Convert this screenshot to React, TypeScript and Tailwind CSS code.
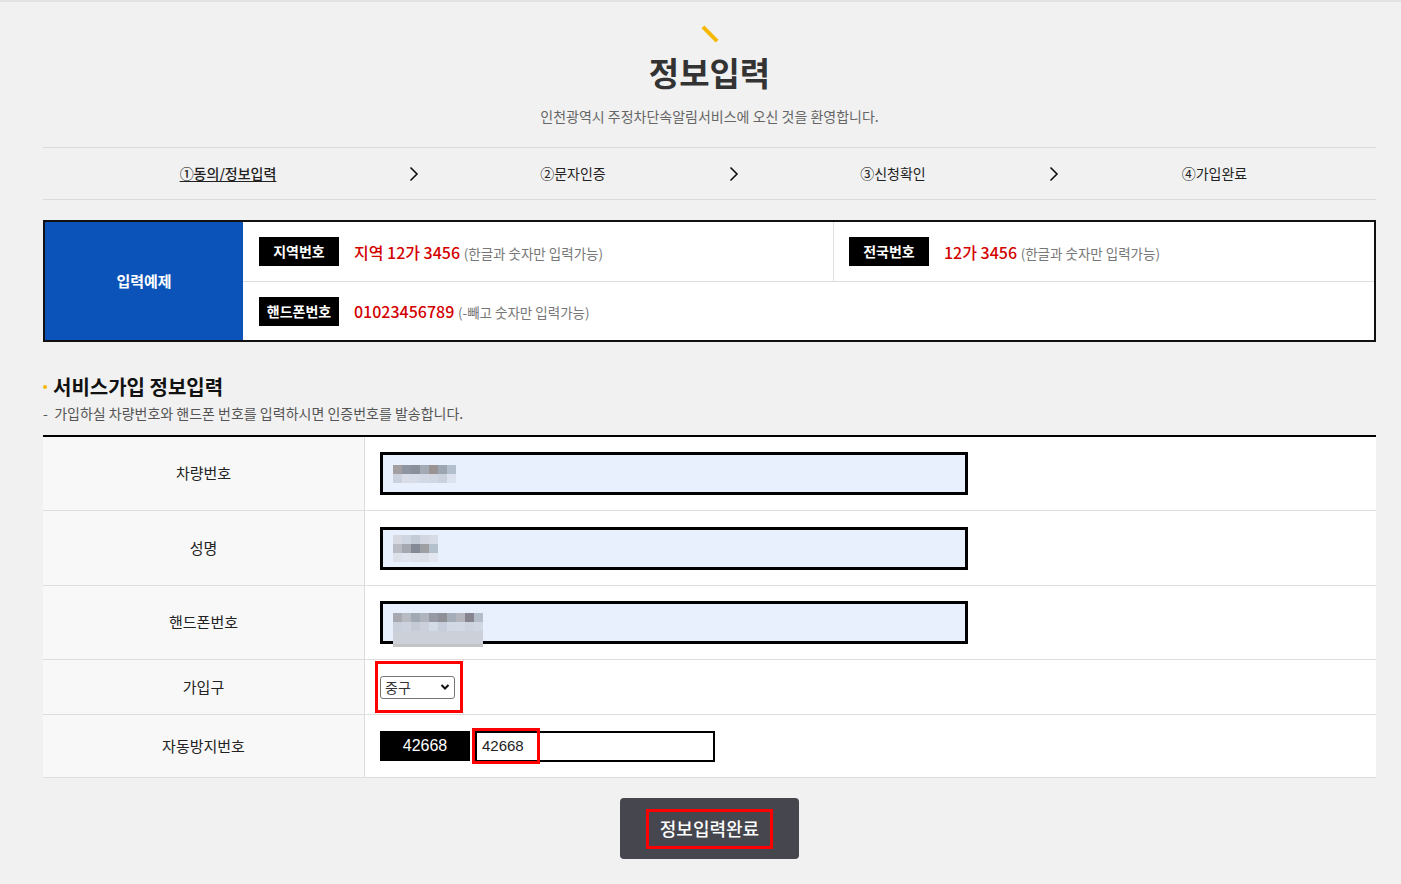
import React from 'react';

const font = { fontFamily: '"Noto Sans CJK KR", "Noto Sans", sans-serif' };

const steps = [
  { label: '①동의/정보입력', active: true, w: 'w-[370px]' },
  { label: '②문자인증', active: false, w: 'w-[320px]' },
  { label: '③신청확인', active: false, w: 'w-[320px]' },
  { label: '④가입완료', active: false, w: 'flex-1' },
];

const Chevron = () => (
  <svg width="10" height="16" viewBox="0 0 10 16" className="absolute right-[-6px] top-1/2 -translate-y-1/2">
    <path d="M1.5 1.5 L8 8 L1.5 14.5" fill="none" stroke="#111" strokeWidth="1.6" />
  </svg>
);

// pixelated placeholder for the blurred values in the form
const Blur = ({ cols, rows }: { cols: string[]; rows: string[] }) => (
  <div className="flex flex-col">
    <div className="flex">
      {cols.map((c, i) => (
        <div key={i} className="w-[9px] h-[9px]" style={{ background: c }} />
      ))}
    </div>
    <div className="flex">
      {rows.map((c, i) => (
        <div key={i} className="w-[9px] h-[9px]" style={{ background: c }} />
      ))}
    </div>
  </div>
);

const Badge = ({ children }: { children: React.ReactNode }) => (
  <span className="inline-flex items-center justify-center w-[80px] h-[29px] bg-black text-white text-[14px] font-bold">
    {children}
  </span>
);

const Row = ({ label, h, children }: { label: string; h: string; children: React.ReactNode }) => (
  <div className={`flex ${h} border-b border-[#dddddd]`}>
    <div className="w-[322px] bg-[#f8f8f8] border-r border-[#dddddd] flex items-center justify-center text-[15px] text-[#222]">
      {label}
    </div>
    <div className="flex-1 bg-white flex items-center pl-[15px]">{children}</div>
  </div>
);

const BlueInput = ({ children }: { children: React.ReactNode }) => (
  <div className="w-[588px] h-[43px] border-[3px] border-black bg-[#e8f0fe] flex items-center pl-[10px]">{children}</div>
);

export default function App() {
  return (
    <div className="min-h-[884px] bg-[#f1f1f1] border-t-2 border-[#e2e2e2]" style={font}>
      <div className="mx-[43px] w-[1333px]">
        <div className="flex flex-col items-center pt-[22px]">
          <div className="w-[4px] h-[20px] bg-[#f5b800] -rotate-45" />
          <h1 className="mt-[6px] text-[33px] leading-[44px] font-bold text-[#333]">정보입력</h1>
          <p className="mt-[12px] text-[14px] leading-[20px] text-[#666]">인천광역시 주정차단속알림서비스에 오신 것을 환영합니다.</p>
        </div>

        <div className="mt-[21px] flex h-[53px] border-y border-[#dcdcdc]">
          {steps.map((s, i) => (
            <div key={i} className={`relative ${s.w} flex items-center justify-center text-[14px] text-[#222]`}>
              <span className={s.active ? 'underline underline-offset-2 font-medium' : ''}>{s.label}</span>
              {i < 3 && <Chevron />}
            </div>
          ))}
        </div>

        <div className="mt-[20px] flex h-[122px] border-2 border-[#111] bg-white">
          <div className="w-[198px] bg-[#0b52b9] flex items-center justify-center text-white text-[15px] font-bold">
            입력예제
          </div>
          <div className="flex-1 flex flex-col">
            <div className="flex h-[60px] border-b border-[#dddddd]">
              <div className="w-[591px] border-r border-[#e2e2e2] flex items-center pl-[16px] gap-[15px]">
                <Badge>지역번호</Badge>
                <span className="text-[16px] text-[#d40000] font-medium">
                  지역 12가 3456 <span className="text-[13.5px] font-normal text-[#777]">(한글과 숫자만 입력가능)</span>
                </span>
              </div>
              <div className="flex-1 flex items-center pl-[15px] gap-[15px]">
                <Badge>전국번호</Badge>
                <span className="text-[16px] text-[#d40000] font-medium">
                  12가 3456 <span className="text-[13.5px] font-normal text-[#777]">(한글과 숫자만 입력가능)</span>
                </span>
              </div>
            </div>
            <div className="flex-1 flex items-center pl-[16px] gap-[15px]">
              <Badge>핸드폰번호</Badge>
              <span className="text-[16px] text-[#d40000] font-medium">
                01023456789 <span className="text-[13.5px] font-normal text-[#777]">(-빼고 숫자만 입력가능)</span>
              </span>
            </div>
          </div>
        </div>

        <div className="mt-[30px] flex items-center gap-[6px]">
          <span className="w-[4px] h-[4px] rounded-full bg-[#f5b800]" />
          <h2 className="text-[20px] font-bold text-[#111] leading-[30px]">서비스가입 정보입력</h2>
        </div>
        <p className="mt-[1px] text-[14px] leading-[20px] text-[#555]">- &nbsp;가입하실 차량번호와 핸드폰 번호를 입력하시면 인증번호를 발송합니다.</p>

        <div className="mt-[12px] border-t-2 border-black">
          <Row label="차량번호" h="h-[74px]">
            <BlueInput>
              <Blur
                cols={['#a39e9f', '#8c95a0', '#8a9099', '#a3aab3', '#9a9394', '#9ca6b3', '#b4bfcd']}
                rows={['#cbd1de', '#d8dde8', '#d6dce8', '#d2d8e4', '#d0d6e2', '#cbd1dd', '#dde3ee']}
              />
            </BlueInput>
          </Row>
          <Row label="성명" h="h-[75px]">
            <BlueInput>
              <div className="flex flex-col">
                <div className="flex">
                  {['#d6d9e2', '#cfd5e1', '#c3cbd6', '#d2d6e0', '#d6dbe5'].map((c, i) => (
                    <div key={i} className="w-[9px] h-[9px]" style={{ background: c }} />
                  ))}
                </div>
                <Blur
                  cols={['#b9bcc4', '#a5a8b0', '#838a95', '#9d9fa3', '#b5c0cd']}
                  rows={['#dde1ea', '#dfe4ee', '#dce1ea', '#dadfe8', '#e2e6ef']}
                />
              </div>
            </BlueInput>
          </Row>
          <Row label="핸드폰번호" h="h-[74px]">
            <BlueInput>
              <div className="flex flex-col mt-[14px]">
                <Blur
                  cols={['#a7a8b0', '#b8bcc2', '#a0a9b4', '#b0b4bc', '#9699a4', '#8f8f98', '#a5adb9', '#b4b5bc', '#86848f', '#b3bcc9']}
                  rows={['#c9cfdb', '#ccd2de', '#c6cad6', '#ccd0dc', '#d2dbe6', '#c8cddb', '#d2d8e4', '#d3d9e5', '#cdd3df', '#d0d6e2']}
                />
                <div className="w-[90px] h-[13px] bg-[#ccd0d9]" />
                <div className="w-[90px] h-[3px] bg-[#c4c4c4]" />
              </div>
            </BlueInput>
          </Row>
          <Row label="가입구" h="h-[55px]">
            <div className="-ml-[5px] border-[3px] border-[#ff0000] pl-[2px] pr-[5px] h-[52px] flex items-center">
              <div className="w-[75px] h-[23px] border border-[#767676] rounded-[3px] bg-white flex items-center justify-between px-[4px] text-[14px] text-[#333]">
                <span>중구</span>
                <svg width="10" height="8" viewBox="0 0 10 8">
                  <path d="M1.5 2 L5 5.5 L8.5 2" fill="none" stroke="#111" strokeWidth="2" />
                </svg>
              </div>
            </div>
          </Row>
          <Row label="자동방지번호" h="h-[63px]">
            <div className="flex items-center">
              <div
                className="w-[90px] h-[30px] bg-black text-white text-[16px] flex items-center justify-center"
                style={{ fontFamily: '"Liberation Sans", Arial, sans-serif' }}
              >
                42668
              </div>
              <div className="relative ml-[5px] w-[240px] h-[31px] border-2 border-black bg-white flex items-center pl-[5px] text-[15px] text-[#222]">
                <span style={{ fontFamily: '"Liberation Sans", Arial, sans-serif' }}>42668</span>
                <div className="absolute left-[-5px] top-[-5px] w-[68px] h-[36px] border-[3px] border-[#ff0000]" />
              </div>
            </div>
          </Row>
        </div>

        <div className="flex justify-center mt-[20px]">
          <button className="w-[179px] h-[61px] bg-[#45464e] rounded-[4px] flex items-center justify-center">
            <span className="border-[3px] border-[#ff0000] px-[11px] h-[40px] flex items-center text-white text-[18px] font-medium">
              정보입력완료
            </span>
          </button>
        </div>
      </div>
    </div>
  );
}
